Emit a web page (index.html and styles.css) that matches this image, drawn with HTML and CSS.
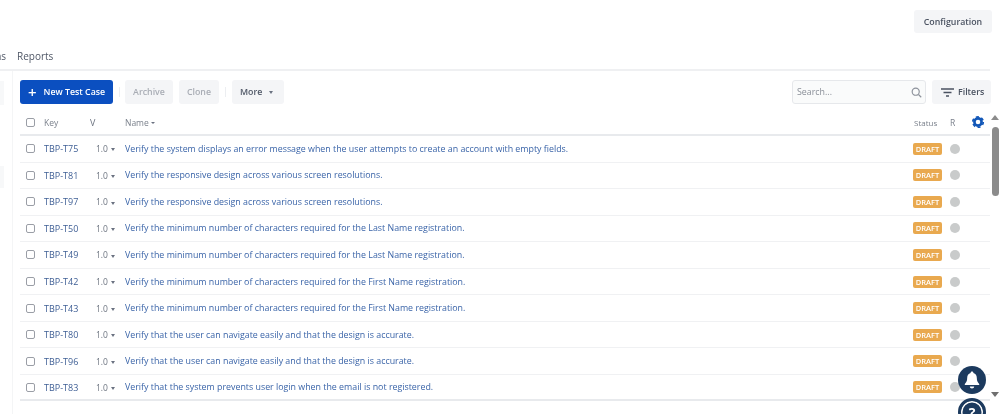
FILE: index.html
```html
<!DOCTYPE html>
<html lang="en">
<head>
    <meta charset="UTF-8">
    <title>Test Cases</title>
    <link rel="stylesheet" href="styles.css">
</head>
<body>
    <div class="top-bar">
        <button class="btn config-btn">Configuration</button>
    </div>

    <nav class="tabs">
        <span>Test Plans</span>
        <span>Reports</span>
    </nav>

    <div class="main">
        <aside class="sidebar">
            <div class="side-item first"></div>
            <div class="side-item second"></div>
        </aside>

        <section class="content">
            <div class="toolbar">
                <button class="btn primary"><span class="plus">+</span>New Test Case</button>
                <span class="divider"></span>
                <button class="btn disabled archive">Archive</button>
                <button class="btn disabled clone">Clone</button>
                <span class="divider"></span>
                <button class="btn more">More <span class="caret"></span></button>
                <div class="search">
                    <span>Search...</span>
                    <svg width="11" height="11" viewBox="0 0 14 14" fill="none" stroke="#8d929b" stroke-width="1.5">
                        <circle cx="6" cy="6" r="4.5"/>
                        <path d="M9.5 9.500 13 13"/>
                    </svg>
                </div>
                <button class="btn filters">
                    <svg width="13" height="9" viewBox="0 0 13 9" fill="none" stroke="#4a5261" stroke-width="1.4">
                        <path d="M0 1h13M2.500 4.500h8M5 8h3"/>
                    </svg>
                    Filters
                </button>
            </div>

            <div class="table">
                <div class="row head">
                    <span class="check"></span>
                    <span class="key">Key</span>
                    <span class="ver">V</span>
                    <span class="name">Name <span class="sort"></span></span>
                    <span class="status">Status</span>
                    <span class="r">R</span>
                    <svg class="gear" width="14" height="14" viewBox="0 0 14 14" fill="none" stroke="#1257b8">
                        <circle cx="7" cy="7" r="3.600" stroke-width="2.600"/>
                        <circle cx="7" cy="7" r="5.300" stroke-width="1.600" stroke-dasharray="3 2.550"/>
                    </svg>
                </div>
                <div class="row"><span class="check"></span><span class="key">TBP-T75</span><span class="ver">1.0 <span class="caret small"></span></span><span class="name">Verify the system displays an error message when the user attempts to create an account with empty fields.</span><span class="draft">DRAFT</span><span class="dot"></span></div>
                <div class="row"><span class="check"></span><span class="key">TBP-T81</span><span class="ver">1.0 <span class="caret small"></span></span><span class="name">Verify the responsive design across various screen resolutions.</span><span class="draft">DRAFT</span><span class="dot"></span></div>
                <div class="row"><span class="check"></span><span class="key">TBP-T97</span><span class="ver">1.0 <span class="caret small"></span></span><span class="name">Verify the responsive design across various screen resolutions.</span><span class="draft">DRAFT</span><span class="dot"></span></div>
                <div class="row"><span class="check"></span><span class="key">TBP-T50</span><span class="ver">1.0 <span class="caret small"></span></span><span class="name">Verify the minimum number of characters required for the Last Name registration.</span><span class="draft">DRAFT</span><span class="dot"></span></div>
                <div class="row"><span class="check"></span><span class="key">TBP-T49</span><span class="ver">1.0 <span class="caret small"></span></span><span class="name">Verify the minimum number of characters required for the Last Name registration.</span><span class="draft">DRAFT</span><span class="dot"></span></div>
                <div class="row"><span class="check"></span><span class="key">TBP-T42</span><span class="ver">1.0 <span class="caret small"></span></span><span class="name">Verify the minimum number of characters required for the First Name registration.</span><span class="draft">DRAFT</span><span class="dot"></span></div>
                <div class="row"><span class="check"></span><span class="key">TBP-T43</span><span class="ver">1.0 <span class="caret small"></span></span><span class="name">Verify the minimum number of characters required for the First Name registration.</span><span class="draft">DRAFT</span><span class="dot"></span></div>
                <div class="row"><span class="check"></span><span class="key">TBP-T80</span><span class="ver">1.0 <span class="caret small"></span></span><span class="name">Verify that the user can navigate easily and that the design is accurate.</span><span class="draft">DRAFT</span><span class="dot"></span></div>
                <div class="row"><span class="check"></span><span class="key">TBP-T96</span><span class="ver">1.0 <span class="caret small"></span></span><span class="name">Verify that the user can navigate easily and that the design is accurate.</span><span class="draft">DRAFT</span><span class="dot"></span></div>
                <div class="row last"><span class="check"></span><span class="key">TBP-T83</span><span class="ver">1.0 <span class="caret small"></span></span><span class="name">Verify that the system prevents user login when the email is not registered.</span><span class="draft">DRAFT</span><span class="dot"></span></div>
            </div>
        </section>

        <div class="scrollbar">
            <span class="arrow up"></span>
            <span class="thumb"></span>
            <span class="arrow down"></span>
        </div>
    </div>

    <div class="bell">
        <svg width="16" height="18" viewBox="0 0 16 18" fill="#fff">
            <path d="M8 .5c.9 0 1.400.6 1.400 1.400 2.300.6 3.400 2.500 3.400 4.800 0 3.400 1 4.600 2.400 6.300v1H.8v-1C2.200 11.300 3.200 10.100 3.200 6.700c0-2.300 1.100-4.200 3.400-4.800C6.600 1.100 7.100.5 8 .5z"/>
            <path d="M5.800 15.500h4.400c0 1.200-1 2-2.200 2s-2.200-.8-2.200-2z"/>
        </svg>
    </div>
    <div class="help">?</div>
</body>
</html>
```

FILE: styles.css
```css
body {
    margin: 0;
    height: 414px;
    overflow: hidden;
    position: relative;
    background-color: #fff;
    font-family: "Open Sans", "Noto Sans", Arial, sans-serif;
    font-size: 8.85px;
    color: #505868;
    filter: blur(0.35px); /* the source capture is soft */
}

.top-bar {
    display: flex;
    justify-content: flex-end;
    padding: 10px 8px 0 0;
    height: 25px;
}

.btn {
    border: none;
    border-radius: 3px;
    height: 24px;
    padding: 0;
    font-family: inherit;
    font-size: 8.8px;
    font-weight: 600;
    background-color: #f4f5f7;
    color: #4a5261;
}

.config-btn {
    width: 78px;
    height: 23px;
}

.tabs {
    display: flex;
    gap: 11px;
    height: 30px;
    align-items: center;
    margin-left: -41px;
    margin-top: 4px;
    padding-top: 4px;
    box-sizing: border-box;
    font-size: 10px;
    color: #4f5766;
}

.main {
    display: flex;
    border-top: 2px solid #eff0f2;
    width: 990px;
    height: 343px;
    position: relative;
}

.sidebar {
    width: 12px;
    flex-shrink: 0;
    border-right: 1px solid #f4f5f6;
}

.side-item {
    width: 4px;
    background-color: #f7f8f9;
}

.side-item.first {
    height: 24px;
    margin-top: 10px;
}

.side-item.second {
    height: 22px;
    margin-top: 61px;
}

.content {
    flex: 1;
    margin-left: 7px;
    min-width: 0;
}

.toolbar {
    display: flex;
    align-items: center;
    padding-top: 9px;
    height: 24px;
}

.btn.primary {
    display: flex;
    align-items: center;
    width: 93px;
    padding-left: 8px;
    background-color: #0b4fc0;
    color: #fff;
}

.plus {
    font-size: 15px;
    font-weight: 600;
    line-height: 1;
    margin-right: 7px;
}

.divider {
    width: 1px;
    height: 10px;
    margin: 0 5.5px;
    background-color: #eceef1;
}

.btn.disabled {
    color: #a9adb5;
}

.btn.archive {
    width: 48px;
    margin-right: 6px;
}

.btn.clone {
    width: 40px;
    margin-right: 5px;
}

.btn.clone + .divider {
    margin: 0 6px 0 1px;
}

.btn.more {
    width: 52px;
    padding-left: 8px;
    text-align: left;
    color: #4f5766;
}

.caret {
    display: inline-block;
    width: 0;
    height: 0;
    margin-left: 4px;
    vertical-align: middle;
    border-left: 2.5px solid transparent;
    border-right: 2.5px solid transparent;
    border-top: 3px solid #6a7180;
}

.caret.small {
    margin-left: 1px;
    border-left-width: 2px;
    border-right-width: 2px;
}

.search {
    display: flex;
    align-items: center;
    justify-content: space-between;
    box-sizing: border-box;
    width: 134px;
    height: 24px;
    margin-left: auto;
    padding: 0 3px 0 4px;
    border: 1.5px solid #e6e8eb;
    border-radius: 3px;
    background-color: #fafbfb;
    color: #8a8f98;
}

.btn.filters {
    display: flex;
    align-items: center;
    gap: 4px;
    width: 59px;
    margin-left: 6px;
    margin-right: -1px;
    padding-left: 9px;
}

.table {
    margin-top: 6px;
}

.row {
    display: flex;
    align-items: center;
    height: 26.55px;
    box-sizing: border-box;
    border-bottom: 1px solid #f0f1f3;
    padding-left: 6px;
    color: #3f5f95;
}

.row.head {
    height: 26px;
    border-bottom: 2px solid #e8eaed;
    color: #7b818c;
}

.row.last {
    border-bottom: 2px solid #e8eaed;
}

.check {
    box-sizing: border-box;
    width: 9px;
    height: 9px;
    border: 1px solid #9a9ea6;
    border-radius: 2px;
    flex-shrink: 0;
}

.key {
    width: 46px;
    margin-left: 9px;
    font-size: 9px;
}

.row.head .key {
    font-size: 8.5px;
}

.ver {
    width: 35px;
    box-sizing: border-box;
    padding-left: 6px;
    color: #6d7480;
    font-size: 8.5px;
}

.row.head .ver {
    padding-left: 0;
    font-size: 9px;
}

.name {
    flex: 1;
    white-space: nowrap;
    color: #3a64a8;
}

.row.head .name {
    color: #7b818c;
    font-size: 8.5px;
}

.sort {
    display: inline-block;
    vertical-align: middle;
    border-left: 2px solid transparent;
    border-right: 2px solid transparent;
    border-top: 2px solid #6a7180;
}

.status {
    width: 36px;
    font-size: 8px;
}

.r {
    width: 21px;
    font-size: 8.5px;
}

.gear {
    margin-right: 5px;
}

.draft {
    width: 29px;
    height: 12px;
    line-height: 12px;
    text-align: center;
    border-radius: 2px;
    background-color: #e9a94f;
    color: #fff;
    font-size: 7.5px;
    font-weight: 600;
}

.dot {
    width: 10px;
    height: 10px;
    margin: 0 30px 0 8px;
    border-radius: 50%;
    background-color: #c9cbcb;
}

.scrollbar {
    position: absolute;
    top: 44px;
    right: -10px;
    width: 10px;
    height: 282px;
    display: flex;
    flex-direction: column;
    align-items: center;
}

.thumb {
    width: 7px;
    height: 69px;
    margin-top: 7px;
    border-radius: 3.5px;
    background-color: #8b8b8b;
}

.arrow {
    border-left: 4px solid transparent;
    border-right: 4px solid transparent;
}

.arrow.up {
    border-bottom: 5px solid #8b8b8b;
}

.arrow.down {
    margin-top: auto;
    border-top: 5px solid #6f6f6f;
}

.bell, .help {
    position: absolute;
    left: 958px;
    width: 28px;
    height: 28px;
    border-radius: 50%;
    display: flex;
    align-items: center;
    justify-content: center;
    background-color: #1c3a5e;
}

.bell {
    top: 366px;
}

.help {
    top: 398px;
    box-sizing: border-box;
    border: 3px solid #1c3a5e;
    box-shadow: inset 0 0 0 1.5px #fff;
    color: #fff;
    font-size: 14px;
    font-weight: 700;
}
```
